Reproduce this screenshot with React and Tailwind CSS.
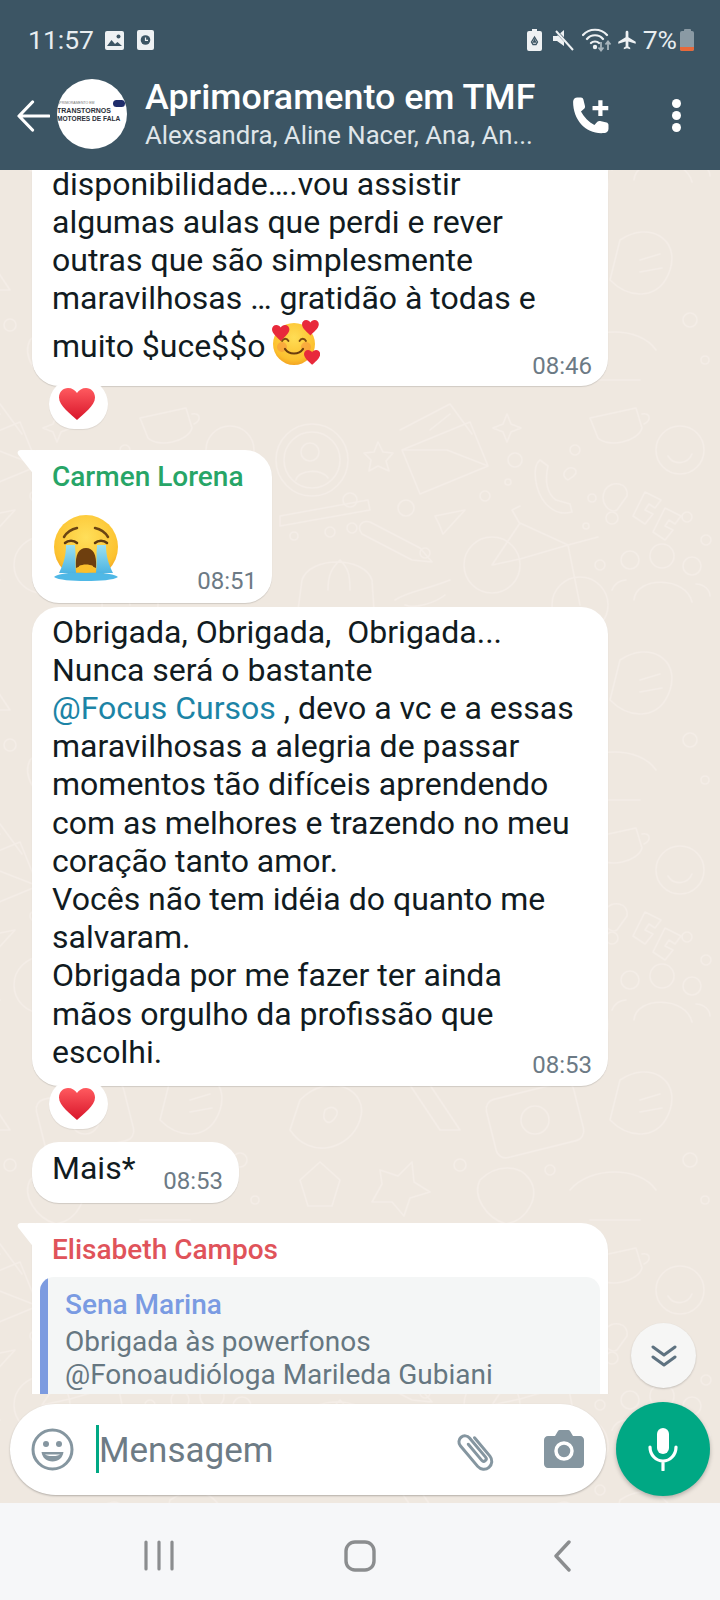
import React from 'react';

const Tail = () => (
  <svg className="absolute left-[-15px] top-0" width="18" height="26" viewBox="0 0 18 26">
    <path d="M18 0H4C1 0 -0.5 2.5 1.5 5L18 26Z" fill="#fff" />
  </svg>
);

const Heart = () => (
  <svg width="36" height="32" viewBox="0 0 36 32">
    <defs>
      <linearGradient id="heartFill" x1="0" y1="0" x2="0" y2="1">
        <stop offset="0" stopColor="#ff5a5f" />
        <stop offset="1" stopColor="#d8152a" />
      </linearGradient>
    </defs>
    <path d="M18 32C12 26 0 18 0 9.5 0 4 4 0 9 0c4 0 7 2 9 5 2-3 5-5 9-5 5 0 9 4 9 9.500C36 18 24 26 18 32Z" fill="url(#heartFill)" />
  </svg>
);

const Reaction = () => (
  <div className="relative z-10 ml-[49px] -mt-[7px] flex h-[50px] w-[59px] items-center justify-center rounded-full bg-white pr-[3px] shadow-[0_1px_1px_rgba(0,0,0,0.08)]">
    <Heart />
  </div>
);

const SmallHeart = ({ x, y, s = 1 }) => (
  <path
    transform={`translate(${x} ${y}) scale(${s})`}
    d="M6 11C4 9 0 6 0 3 0 1.300 1.300 0 3 0c1.300 0 2.400.7 3 1.700C6.600.7 7.700 0 9 0c1.700 0 3 1.300 3 3 0 3-4 6-6 8Z"
    fill="#e8293b"
  />
);

const FaceHearts = () => (
  <svg width="48" height="46" viewBox="0 0 48 46">
    <defs>
      <radialGradient id="faceA" cx="0.5" cy="0.35" r="0.7">
        <stop offset="0" stopColor="#ffdd55" />
        <stop offset="0.75" stopColor="#fcc02e" />
        <stop offset="1" stopColor="#f09a1c" />
      </radialGradient>
    </defs>
    <circle cx="22" cy="24" r="21" fill="url(#faceA)" />
    <circle cx="10" cy="27" r="5" fill="#f6913e" opacity="0.55" />
    <circle cx="34" cy="27" r="5" fill="#f6913e" opacity="0.55" />
    <path d="M10 21c1.500-3 5-3 6.500 0M27.500 21c1.500-3 5-3 6.500 0" fill="none" stroke="#7a4a12" strokeWidth="1.800" strokeLinecap="round" />
    <path d="M13 29c4 6 14 6 18 0" fill="none" stroke="#6b3d0e" strokeWidth="2.200" strokeLinecap="round" />
    <SmallHeart x={0} y={5} s={1.450} />
    <SmallHeart x={30} y={0} s={1.400} />
    <SmallHeart x={32} y={30} s={1.350} />
  </svg>
);

const FaceCrying = () => (
  <svg width="68" height="68" viewBox="0 0 68 68">
    <defs>
      <radialGradient id="faceB" cx="0.5" cy="0.35" r="0.7">
        <stop offset="0" stopColor="#ffdf5a" />
        <stop offset="0.75" stopColor="#fcc22f" />
        <stop offset="1" stopColor="#ee941a" />
      </radialGradient>
      <linearGradient id="tearFill" x1="0" y1="0" x2="0" y2="1">
        <stop offset="0" stopColor="#9be0f0" />
        <stop offset="1" stopColor="#4db4e2" />
      </linearGradient>
    </defs>
    <circle cx="34" cy="33" r="32" fill="url(#faceB)" />
    <path d="M12 23c3-5 8-8 13-9M56 23c-3-5-8-8-13-9" fill="none" stroke="#6b4412" strokeWidth="2.500" strokeLinecap="round" />
    <path d="M13 29c3-3 9-3 12 0M43 29c3-3 9-3 12 0" fill="none" stroke="#5f3b10" strokeWidth="2.500" strokeLinecap="round" />
    <path d="M24 54c-1-14 3-20 10-20s11 6 10 20c-6-3-14-3-20 0Z" fill="#6e3f0f" />
    <path d="M27 52c4-2 10-2 14 0l1 6H26Z" fill="#fbc02d" />
    <path d="M14 31h9c1 10 0 20 1 28H7c4-8 7-16 7-28Z" fill="url(#tearFill)" />
    <path d="M45 31h9c0 12 3 20 7 28H44c1-8 0-18 1-28Z" fill="url(#tearFill)" />
    <path d="M2 63c4-3 14-5 32-4 16-1 28 1 32 4-4 3-18 4-32 4S6 66 2 63Z" fill="#4fb8e6" />
  </svg>
);

const Time = ({ children, className = '' }) => (
  <span className={`text-[24px] leading-[28px] text-[#6c7a85] ${className}`}>{children}</span>
);

const Bubble = ({ className = '', children }) => (
  <div className={`relative ml-[32px] rounded-[27px] bg-white text-[32px] leading-[38.2px] text-[#111b21] shadow-[0_1px_1px_rgba(0,0,0,0.13)] ${className}`}>
    {children}
  </div>
);

const Doodles = () => (
  <svg className="absolute inset-0 h-full w-full" xmlns="http://www.w3.org/2000/svg">
    <defs>
      <pattern id="doodles" width="450" height="420" patternUnits="userSpaceOnUse" patternTransform="translate(270 230)">
        <g fill="none" stroke="#f4ede7" strokeWidth="1.600" strokeLinecap="round" strokeLinejoin="round">
          {/* profile ring */}
          <circle cx="42" cy="60" r="36" />
          <circle cx="42" cy="60" r="28" />
          <circle cx="40" cy="52" r="9" />
          <path d="M26 80c2-10 26-12 32-2" />
          {/* envelope */}
          <path d="M132 50 200 22l18 44-68 28ZM132 50l45 0 41 16M130 30l50-26 22 30" />
          <path d="M160 30l20-16" />
          {/* star and sparkle */}
          <path d="M108 42l5 10 10 1-7 8 3 10-11-5-9 5 2-11-7-7 10-1Z" />
          <path d="M237 14l4 10 10 4-10 4-4 10-4-10-10-4 10-4Z" />
          {/* phone */}
          <path d="M270 60c-8 6-6 30 6 44 10 10 18 10 26 8l-2-8-14-4c-8-6-12-16-8-34Z" />
          <path d="M296 70c4-4 10-2 10 2s-6 6-8 8c-4-2-6-6-2-10Z" />
          {/* coffee */}
          <path d="M320 18l46-10 6 20c-4 14-34 20-44 10ZM372 14c8-2 10 6 2 10" />
          {/* face */}
          <circle cx="410" cy="50" r="24" />
          <path d="M398 56c6 10 20 8 24-2" />
          {/* pencil */}
          <path d="M100 122l50 26 12 14-20-2-50-26c-6-8 0-14 8-12Z" />
          <path d="M10 116l88-16 2 10-90 16Z" />
          {/* bike */}
          <circle cx="222" cy="165" r="28" />
          <circle cx="310" cy="205" r="28" />
          <path d="M222 165l28-42 48 22-48 14ZM250 124l-8-14 8-4M298 145l30-8M298 145l12 60" />
          {/* paper plane */}
          <path d="M165 116l30-6-22 24-4-10Z" />
          {/* people */}
          <circle cx="392" cy="156" r="12" />
          <circle cx="360" cy="160" r="9" />
          <circle cx="422" cy="166" r="9" />
          <path d="M364 200c2-24 52-24 58 2M342 190c2-6 8-10 14-10M426 184c8 0 14 6 14 12" />
          {/* girl */}
          <path d="M32 180c8-24 62-24 70 0l2 30M32 180l-4 30M70 160c-8 8-12 14-12 30M70 160c8 8 10 14 10 30" />
          <path d="M125 200c12-8 30-10 55-20M135 205c10 4 30-2 40-10" />
          {/* letters */}
          <path d="M335 90c6-10 24-8 22 6l-10 14c-8 4-18-8-12-20ZM375 92l16 8-6 8-6-4-4 6 8 4-8 10-12-8ZM395 108l16 8-6 8-6-4-4 6 8 4-8 10-12-8Z" />
          {/* small rounds */}
          <circle cx="80" cy="100" r="7" />
          <circle cx="60" cy="132" r="5" />
          <circle cx="82" cy="128" r="5" />
          <circle cx="136" cy="108" r="8" />
          <circle cx="155" cy="153" r="5" />
          <circle cx="245" cy="60" r="7" />
          <circle cx="215" cy="96" r="5" />
          <circle cx="238" cy="82" r="3" />
          <circle cx="322" cy="98" r="4" />
          <circle cx="342" cy="118" r="6" />
          <circle cx="316" cy="126" r="3" />
          <circle cx="417" cy="117" r="5" />
          <circle cx="436" cy="140" r="5" />
          <circle cx="305" cy="50" r="5" />
          <circle cx="24" cy="136" r="4" />
          <circle cx="330" cy="165" r="5" />
          <circle cx="330" cy="250" r="5" />
          {/* lower half of the tile */}
          <path d="M30 280c30-30 70-10 60 20s-50 40-70 10ZM55 290c8-6 16 0 10 8s-14 4-10-8Z" />
          <path d="M130 250l40 60M150 250l40 60M130 250l20 0M170 310l20 0" />
          <rect x="220" y="270" width="90" height="60" rx="10" transform="rotate(-14 265 300)" />
          <circle cx="265" cy="300" r="14" />
          <path d="M350 260c30-20 60 0 50 30s-40 30-60 10Z" />
          <path d="M370 280l20-6M370 292l22-4" />
          <path d="M30 360l20-18 20 18-8 26H38ZM110 350l18 6 14-14 2 20 16 10-20 6-6 18-12-14-20 0 10-18Z" />
          <path d="M210 360c16-16 40-16 50 0s-2 40-24 44c-20-6-34-28-26-44Z" />
          <path d="M300 370c20-24 70-24 86 0M320 400l50 0" />
          <circle cx="190" cy="345" r="6" />
          <circle cx="280" cy="350" r="5" />
          <circle cx="420" cy="340" r="7" />
          <circle cx="435" cy="380" r="4" />
        </g>
      </pattern>
    </defs>
    <rect width="100%" height="100%" fill="url(#doodles)" />
  </svg>
);

const StatusBar = () => (
  <div className="flex h-[80px] items-start justify-between pl-[28px] pr-[26px] pt-[23px] text-[#e8edf0]">
    <div className="flex items-center">
      <span className="text-[26.500px] leading-[34px]">11:57</span>
      <svg className="ml-[11px]" width="19" height="19" viewBox="0 0 19 19">
        <rect width="19" height="19" rx="2" fill="#eef1f3" />
        <circle cx="13.500" cy="5.500" r="2" fill="#3c5564" />
        <path d="M2 15l4.500-6 3.500 4 2.500-2 4.500 4Z" fill="#3c5564" />
      </svg>
      <svg className="ml-[13px]" width="17" height="20" viewBox="0 0 17 20">
        <rect width="17" height="20" rx="2" fill="#eef1f3" />
        <circle cx="8.500" cy="10" r="4.800" fill="#3c5564" />
        <path d="M8.500 7.500V10.300H11" fill="none" stroke="#eef1f3" strokeWidth="1.200" />
      </svg>
    </div>
    <div className="flex items-center">
      <svg className="mt-[-1px]" width="15" height="22" viewBox="0 0 15 22">
        <path d="M5 0h5v2h3a2 2 0 0 1 2 2v16a2 2 0 0 1-2 2H2a2 2 0 0 1-2-2V4a2 2 0 0 1 2-2h3Z" fill="#eef1f3" />
        <path d="M7.500 8l-3 5 1.500 2.500h3L10.500 13ZM7.500 11l-1 2h2Z" fill="none" stroke="#3c5564" strokeWidth="1.300" />
      </svg>
      <svg className="ml-[10px]" width="22" height="22" viewBox="0 0 22 22">
        <path d="M1 7h4l7-6v16l-7-5H1Z" fill="#eef1f3" />
        <path d="M3 1l18 19" stroke="#3c5564" strokeWidth="3" />
        <path d="M4 2l17 19" stroke="#eef1f3" strokeWidth="2" />
      </svg>
      <svg className="ml-[8px]" width="30" height="24" viewBox="0 0 30 24">
        <path d="M1 7c6-7 18-7 24 0M5 11c4-5 12-5 16 0M9 15c2-2 6-2 8 0" fill="none" stroke="#eef1f3" strokeWidth="2.200" strokeLinecap="round" />
        <circle cx="13" cy="19" r="2.200" fill="#eef1f3" />
        <path d="M19 14v8M16.500 19.500l2.500 3 2.500-3" fill="none" stroke="#a6b3bb" strokeWidth="1.800" />
        <path d="M26 22v-8M23.500 16.500l2.500-3 2.500 3" fill="none" stroke="#a6b3bb" strokeWidth="1.800" />
      </svg>
      <svg className="ml-[4px]" width="22" height="22" viewBox="0 0 24 24">
        <path d="M21 16v-2l-8-5V3.500a1.500 1.500 0 0 0-3 0V9l-8 5v2l8-2.500V19l-2 1.500V22l3.500-1 3.500 1v-1.500L13 19v-5.500Z" fill="#eef1f3" transform="translate(0.500 0)" />
      </svg>
      <span className="ml-[5px] text-[26.500px] leading-[34px]">7%</span>
      <div className="ml-[3px] flex flex-col items-center">
        <div className="h-[2px] w-[7px] rounded-t-[1px] bg-[#8a9aa4]" />
        <div className="flex h-[20px] w-[14px] flex-col justify-end overflow-hidden rounded-[2px] bg-[#8a9aa4]">
          <div className="h-[4px] bg-[#e8693a]" />
        </div>
      </div>
    </div>
  </div>
);

const Avatar = () => (
  <div className="relative flex h-[70px] w-[70px] shrink-0 flex-col justify-center overflow-hidden rounded-full bg-white font-['Liberation_Sans',sans-serif] font-bold text-[#2b2f38]">
    <span className="mt-[-5px] whitespace-nowrap text-[3.500px] font-normal leading-[7px] text-[#777]">APRIMORAMENTO EM</span>
    <span className="whitespace-nowrap text-[7px] leading-[8px]">TRANSTORNOS</span>
    <span className="whitespace-nowrap text-[6.600px] leading-[8px]">MOTORES DE FALA</span>
    <div className="absolute right-[2px] top-[21px] h-[7px] w-[12px] rounded-full bg-[#1f2d6b]" />
  </div>
);

const Header = () => (
  <header className="relative z-10 h-[170px] shrink-0 bg-[#3c5564]">
    <StatusBar />
    <div className="flex h-[90px] items-center pl-[17px]">
      <svg width="33" height="32" viewBox="0 0 33 32" className="mt-[-19px] shrink-0">
        <path d="M32 16H3M15.500 2 2 16l13.500 14" fill="none" stroke="#fff" strokeWidth="3.200" strokeLinecap="round" strokeLinejoin="round" />
      </svg>
      <div className="ml-[7px] mt-[-22px]">
        <Avatar />
      </div>
      <div className="ml-[18px] mt-[-23px] w-[392px] min-w-0">
        <div className="whitespace-nowrap text-[35.800px] font-medium leading-[44px] text-white">Aprimoramento em TMF</div>
        <div className="mt-[-2px] whitespace-nowrap text-[25.700px] leading-[36px] text-[#dfe5e9]">Alexsandra, Aline Nacer, Ana, An...</div>
      </div>
      <svg className="ml-[34px] mt-[-16px]" width="42" height="42" viewBox="0 0 40 40">
        <path d="M2 5.500C2 3 4 1.500 6 1.500h3.500c1.200 0 2 .8 2.300 1.800l1.500 6.200c.2 1 0 1.900-.8 2.600l-3 2.700c2.800 5.500 7.400 10 12.800 12.800l2.800-3c.7-.8 1.700-1 2.600-.8l6.200 1.500c1 .3 1.800 1.200 1.800 2.300v3.700c0 2.300-1.700 4-4 4C15 37 2 23.500 2 5.500Z" fill="#fff" />
        <path d="M28 4v15M20.500 11.500h15" stroke="#fff" strokeWidth="4" />
      </svg>
      <div className="ml-[59px] mt-[-19px] flex flex-col gap-[3px]">
        <div className="h-[9px] w-[9px] rounded-full bg-white" />
        <div className="h-[9px] w-[9px] rounded-full bg-white" />
        <div className="h-[9px] w-[9px] rounded-full bg-white" />
      </div>
    </div>
  </header>
);

const Messages = () => (
  <div className="relative h-[1224px] overflow-hidden">
    {/* first message is scrolled under the header */}
    <Bubble className="w-[576px] rounded-t-none pb-[20px] pl-[20px] pr-[16px]">
      <div className="mb-[5px] leading-[28px]">disponibilidade….vou assistir</div>
      <div>algumas aulas que perdi e rever</div>
      <div>outras que são simplesmente</div>
      <div>maravilhosas … gratidão à todas e</div>
      <div className="mt-[8px] flex items-end justify-between">
        <div className="flex items-center">
          muito $uce$$o
          <span className="ml-[7px] mt-[-6px] inline-flex"><FaceHearts /></span>
        </div>
        <Time className="mb-[-14px]">08:46</Time>
      </div>
    </Bubble>
    <Reaction />

    <Bubble className="mt-[21px] h-[153px] w-[240px] rounded-tl-[4px] pl-[20px] pr-[15px]">
      <Tail />
      <div className="pt-[9px] text-[28px] font-medium leading-[36px] text-[#27a567]">Carmen Lorena</div>
      <div className="mt-[19px] flex items-end justify-between">
        <FaceCrying />
        <Time className="mb-[-13px]">08:51</Time>
      </div>
    </Bubble>

    <Bubble className="mt-[4px] w-[576px] pb-[15px] pl-[20px] pr-[16px] pt-[6px]">
      <div>Obrigada, Obrigada,&nbsp; Obrigada...</div>
      <div>Nunca será o bastante</div>
      <div><span className="text-[#1c84a6]">@Focus Cursos</span> , devo a vc e a essas</div>
      <div>maravilhosas a alegria de passar</div>
      <div>momentos tão difíceis aprendendo</div>
      <div>com as melhores e trazendo no meu</div>
      <div>coração tanto amor.</div>
      <div>Vocês não tem idéia do quanto me</div>
      <div>salvaram.</div>
      <div>Obrigada por me fazer ter ainda</div>
      <div>mãos orgulho da profissão que</div>
      <div className="flex items-end justify-between">
        <span>escolhi.</span>
        <Time className="mb-[-8px]">08:53</Time>
      </div>
    </Bubble>
    <Reaction />

    <Bubble className="mt-[13px] flex h-[61px] w-[207px] justify-between pl-[20px] pr-[16px] pt-[7px]">
      <span>Mais*</span>
      <Time className="mt-[18px]">08:53</Time>
    </Bubble>

    <Bubble className="mt-[20px] h-[220px] w-[576px] rounded-tl-[4px] px-[8px]">
      <Tail />
      <div className="pl-[12px] pt-[9px] text-[28px] font-medium leading-[36px] text-[#e0535a]">Elisabeth Campos</div>
      <div className="mt-[9px] flex h-[160px] overflow-hidden rounded-[14px] bg-[#f4f6f6]">
        <div className="w-[8px] shrink-0 bg-[#7c9be0]" />
        <div className="pl-[17px] pt-[11px]">
          <div className="text-[28px] font-medium leading-[34px] text-[#7a9be2]">Sena Marina</div>
          <div className="mt-[3px] text-[28px] leading-[33px] text-[#667781]">Obrigada às powerfonos</div>
          <div className="text-[28px] leading-[33px] text-[#667781]">@Fonoaudióloga Marileda Gubiani</div>
        </div>
      </div>
    </Bubble>
  </div>
);

const Composer = () => (
  <div className="relative mt-[8px] flex items-center px-[10px]">
    <div className="flex h-[91px] w-[598px] items-center rounded-full bg-white pl-[21px] pr-[22px] shadow-[0_1px_2px_rgba(0,0,0,0.25)]">
      <svg width="43" height="43" viewBox="0 0 43 43">
        <circle cx="21.500" cy="21.500" r="19.500" fill="none" stroke="#8596a0" strokeWidth="3" />
        <circle cx="15" cy="16" r="3" fill="#8596a0" />
        <circle cx="28" cy="16" r="3" fill="#8596a0" />
        <path d="M10.500 24h22c-1 6-5 9.500-11 9.500s-10-3.500-11-9.500Z" fill="#8596a0" />
        <path d="M14 26.500h15c-1 .8-3 1.500-7.500 1.500s-6.500-.7-7.500-1.500Z" fill="#fff" />
      </svg>
      <div className="ml-[22px] h-[48px] w-[3px] bg-[#00a884]" />
      <span className="mt-[3px] text-[35px] leading-[44px] text-[#6d7b85]">Mensagem</span>
      <svg className="ml-auto mt-[2px]" width="44" height="46" viewBox="0 0 44 46">
        <g transform="rotate(-40 22 23)">
          <path d="M28 12v24a8 8 0 0 1-16 0V9a6 6 0 0 1 12 0v25a2.500 2.500 0 0 1-5 0V13" fill="none" stroke="#8596a0" strokeWidth="3" strokeLinecap="round" strokeLinejoin="round" />
        </g>
      </svg>
      <svg className="ml-[45px]" width="40" height="38" viewBox="0 0 40 38">
        <path d="M4 6h7l3-5c.4-.6 1-1 1.700-1h8.600c.7 0 1.300.4 1.700 1l3 5h7c2.200 0 4 1.800 4 4v24c0 2.200-1.800 4-4 4H4c-2.200 0-4-1.800-4-4V10c0-2.200 1.800-4 4-4Z" fill="#8596a0" />
        <circle cx="20" cy="21" r="8" fill="none" stroke="#fff" strokeWidth="3.500" />
      </svg>
    </div>
    <div className="ml-[10px] flex h-[94px] w-[94px] shrink-0 items-center justify-center rounded-full bg-[#00a884] shadow-[0_2px_4px_rgba(0,0,0,0.25)]">
      <svg width="30" height="44" viewBox="0 0 30 44">
        <rect x="9" y="1" width="12" height="26" rx="6" fill="#fff" />
        <path d="M2 20c0 8 6 14 13 14s13-6 13-14M15 34v9" fill="none" stroke="#fff" strokeWidth="3.200" strokeLinecap="round" />
      </svg>
    </div>
  </div>
);

const NavBar = () => (
  <nav className="flex h-[97px] shrink-0 items-start justify-center gap-[169px] bg-[#f6f7f9] pl-[2px] pt-[37px]">
    <svg width="32" height="32" viewBox="0 0 32 32">
      <path d="M3 2v27M16 2v27M29 2v27" stroke="#8b8d8f" strokeWidth="3.200" strokeLinecap="round" />
    </svg>
    <svg width="32" height="32" viewBox="0 0 32 32">
      <rect x="2" y="2" width="28" height="28" rx="9" fill="none" stroke="#8b8d8f" strokeWidth="3.400" />
    </svg>
    <svg width="32" height="32" viewBox="0 0 32 32" className="ml-[3px]">
      <path d="M21 2 8 16l13 14" fill="none" stroke="#8b8d8f" strokeWidth="3.400" strokeLinecap="round" strokeLinejoin="round" />
    </svg>
  </nav>
);

export default function App() {
  return (
    <div className="flex h-[1600px] w-[720px] flex-col overflow-hidden bg-[#efe8e0] font-['Roboto',sans-serif]">
      <Header />
      <main className="relative flex-1 overflow-hidden">
        <Doodles />
        <Messages />
        <Composer />
        {/* scroll to bottom button */}
        <div className="absolute right-[24px] top-[1153px] flex h-[65px] w-[65px] items-center justify-center rounded-full bg-[#f6f6f5] shadow-[0_1px_2px_rgba(0,0,0,0.18)]">
          <svg width="26" height="24" viewBox="0 0 26 24">
            <path d="M2 3l11 8 11-8M2 13l11 8 11-8" fill="none" stroke="#5e7280" strokeWidth="3" strokeLinecap="round" strokeLinejoin="round" />
          </svg>
        </div>
      </main>
      <NavBar />
    </div>
  );
}
